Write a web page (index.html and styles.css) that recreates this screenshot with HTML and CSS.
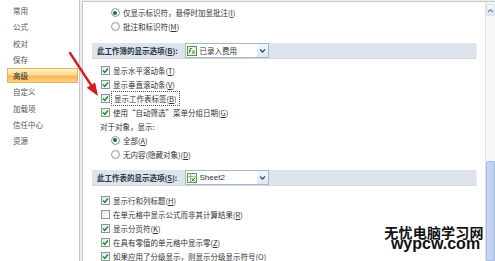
FILE: index.html
```html
<!DOCTYPE html>
<html lang="zh-CN">
<head>
<meta charset="utf-8">
<link rel="stylesheet" href="styles.css">
</head>
<body>
<div class="window">
  <nav class="sidebar">
    <div class="nav-item">常用</div>
    <div class="nav-item">公式</div>
    <div class="nav-item">校对</div>
    <div class="nav-item">保存</div>
    <div class="nav-item active">高级</div>
    <div class="nav-item">自定义</div>
    <div class="nav-item">加载项</div>
    <div class="nav-item">信任中心</div>
    <div class="nav-item">资源</div>
  </nav>
  <main class="panel">
    <div class="content">
      <div class="row radio-row first"><span class="radio checked"></span><span class="label">仅显示标识符，悬停时加显批注(<u>I</u>)</span></div>
      <div class="row radio-row"><span class="radio"></span><span class="label">批注和标识符(<u>M</u>)</span></div>

      <div class="band band-1">
        <span class="band-label">此工作簿的显示选项(<u>B</u>):</span>
        <div class="select">
          <svg class="sel-icon" width="10" height="10" viewBox="0 0 10 10"><rect x="0.5" y="0.5" width="9" height="9" fill="#eef6e8" stroke="#4c9a3a"/><path d="M2 7.5 L3.2 2.5 L5 2.5 M2.2 5 L4 5 M5.2 4.5 L7.8 7.8 M7.8 4.5 L5.2 7.8" stroke="#2f7a23" stroke-width="0.9" fill="none"/></svg>
          <span class="sel-text">已录入费用</span>
          <span class="sel-btn"><svg width="7" height="6" viewBox="0 0 7 6"><path d="M1 1.5 L3.5 4 L6 1.5" stroke="#2d4f86" stroke-width="1.3" fill="none"/></svg></span>
        </div>
      </div>

      <div class="row check-row after-band"><span class="check on"></span><span class="label">显示水平滚动条(<u>T</u>)</span></div>
      <div class="row check-row"><span class="check on"></span><span class="label">显示垂直滚动条(<u>V</u>)</span></div>
      <div class="row check-row"><span class="check on"></span><span class="label focus">显示工作表标签(<u>B</u>)</span></div>
      <div class="row check-row"><span class="check on green"></span><span class="label">使用“自动筛选”菜单分组日期(<u>G</u>)</span></div>
      <div class="row plain-row"><span class="label">对于对象，显示:</span></div>
      <div class="row radio-row"><span class="radio checked"></span><span class="label">全部(<u>A</u>)</span></div>
      <div class="row radio-row"><span class="radio"></span><span class="label">无内容(隐藏对象)(<u>D</u>)</span></div>

      <div class="band band-2">
        <span class="band-label">此工作表的显示选项(<u>S</u>):</span>
        <div class="select">
          <svg class="sel-icon" width="10" height="10" viewBox="0 0 10 10"><rect x="0.5" y="0.5" width="9" height="9" fill="#f2f8ee" stroke="#5c9e4a"/><path d="M0.5 3.5 H9.5 M3.5 0.5 V9.5" stroke="#7fb36d" stroke-width="0.8"/><path d="M4.5 5 L8 8.5 M8 5 L4.5 8.5" stroke="#2f7a23" stroke-width="1"/></svg>
          <span class="sel-text latin">Sheet2</span>
          <span class="sel-btn"><svg width="7" height="6" viewBox="0 0 7 6"><path d="M1 1.5 L3.5 4 L6 1.5" stroke="#2d4f86" stroke-width="1.3" fill="none"/></svg></span>
        </div>
      </div>

      <div class="row check-row after-band-2"><span class="check on"></span><span class="label">显示行和列标题(<u>H</u>)</span></div>
      <div class="row check-row"><span class="check"></span><span class="label">在单元格中显示公式而非其计算结果(<u>R</u>)</span></div>
      <div class="row check-row"><span class="check on"></span><span class="label">显示分页符(<u>K</u>)</span></div>
      <div class="row check-row"><span class="check on"></span><span class="label">在具有零值的单元格中显示零(<u>Z</u>)</span></div>
      <div class="row check-row"><span class="check on"></span><span class="label">如果应用了分级显示，则显示分级显示符号(<u>O</u>)</span></div>
    </div>
    <div class="scrollbar">
      <span class="scroll-up"><svg width="7" height="5" viewBox="0 0 7 5"><path d="M1 4 L3.5 1.5 L6 4" stroke="#6f87b0" stroke-width="1.2" fill="none"/></svg></span>
      <span class="scroll-thumb"></span>
    </div>
  </main>

  <svg class="arrow" width="495" height="261" viewBox="0 0 495 261">
    <line x1="70" y1="53" x2="91" y2="85" stroke="#cf2020" stroke-width="2.4" stroke-linecap="round"/>
    <polygon points="98,96 86.7,87.8 95.1,82.4" fill="#cf2020"/>
  </svg>

  <div class="watermark">
    <div class="wm-cn">无忧电脑学习网</div>
    <div class="wm-en">wypcw.com</div>
  </div>
</div>
</body>
</html>
```

FILE: styles.css
```css
* { box-sizing: border-box; }

html, body {
  margin: 0;
  padding: 0;
}

body {
  width: 495px;
  height: 261px;
  overflow: hidden;
  background: #ffffff;
  font-family: "Noto Sans CJK SC", "Noto Sans", sans-serif;
  font-size: 7.5px;
  color: #333333;
}

u { text-decoration: underline; text-underline-offset: 1px; }

.window {
  position: relative;
  display: flex;
  width: 495px;
  height: 261px;
  background: #ececec;
}

/* ---------- sidebar ---------- */
.sidebar {
  width: 80px;
  flex: none;
  background: #ffffff;
  border-right: 1px solid #c8c8c8;
  padding-top: 2.35px;
  display: flex;
  flex-direction: column;
}

.nav-item {
  height: 15px;
  margin: 0.65px 0 0.65px 7px;
  width: 71px;
  padding-left: 6px;
  display: flex;
  align-items: center;
  color: #555555;
}

.nav-item.active {
  color: #2b2b2b;
  background: linear-gradient(#fff1cc 0%, #fcd894 45%, #f8b54f 55%, #fbd083 100%);
  border: 1px solid #e6b25c;
  padding-left: 5px;
}

/* ---------- main panel ---------- */
.panel {
  flex: 1;
  margin-left: 2px;
  margin-top: 1px;
  border-left: 1px solid #c8c8c8;
  border-top: 1px solid #c8c8c8;
  background: #ffffff;
  display: flex;
  min-width: 0;
}

.content {
  flex: 1;
  padding: 3.5px 8px 0 9px;
  display: flex;
  flex-direction: column;
  min-width: 0;
}

.row {
  height: 14px;
  display: flex;
  align-items: center;
  white-space: nowrap;
  flex: none;
}

.radio-row { padding-left: 18.5px; }
.radio-row .label { margin-left: 3.5px; }

.check-row { padding-left: 9px; }
.check-row .label { margin-left: 3px; }

.plain-row { padding-left: 8px; }

.radio {
  width: 9px;
  height: 9px;
  border-radius: 50%;
  border: 1px solid #8d99a6;
  background: radial-gradient(circle at 40% 35%, #ffffff 0%, #e9ecef 100%);
  display: inline-flex;
  align-items: center;
  justify-content: center;
  flex: none;
}

.radio.checked::after {
  content: "";
  width: 4px;
  height: 4px;
  border-radius: 50%;
  background: #2f6f2c;
}

.check {
  width: 9px;
  height: 9px;
  border: 1px solid #8c96a0;
  background: linear-gradient(135deg, #e4e7ea 0%, #ffffff 100%);
  flex: none;
  position: relative;
}

.check.on {
  background:
    url("data:image/svg+xml;utf8,<svg xmlns='http://www.w3.org/2000/svg' width='7' height='7' viewBox='0 0 7 7'><path d='M1 3.5 L2.8 5.3 L6 1.6' stroke='%23229022' stroke-width='1.5' fill='none'/></svg>") center / 7px 7px no-repeat,
    linear-gradient(135deg, #e2e6e9 0%, #ffffff 100%);
}

.check.on.green {
  background:
    url("data:image/svg+xml;utf8,<svg xmlns='http://www.w3.org/2000/svg' width='7' height='7' viewBox='0 0 7 7'><path d='M1 3.5 L2.8 5.3 L6 1.6' stroke='%23229022' stroke-width='1.5' fill='none'/></svg>") center / 7px 7px no-repeat,
    linear-gradient(135deg, #d9ead2 0%, #f4fbef 100%);
}

.label.focus {
  outline: 1px dotted #555555;
  outline-offset: 1px;
  padding: 0 1px;
}

/* ---------- band headers ---------- */
.band {
  height: 16px;
  flex: none;
  display: flex;
  align-items: center;
  background: #dde4ec;
  border-bottom: 1px solid #cdd6e1;
  border-right: 1px solid #eef2f6;
  white-space: nowrap;
}

.band-1 { margin-top: 9.5px; }
.band-2 { margin-top: 9px; }

.after-band { margin-top: 4px; }
.after-band-2 { margin-top: 7px; }

.band-label {
  width: 93px;
  padding-left: 5px;
  font-weight: bold;
  color: #2a3440;
  flex: none;
}

.select {
  width: 84px;
  height: 15px;
  border: 1px solid #a8b7cb;
  background: #ffffff;
  display: flex;
  align-items: center;
  flex: none;
}

.sel-icon {
  margin-left: 1px;
  flex: none;
}

.sel-text {
  margin-left: 2.5px;
  flex: 1;
  color: #333333;
}

.sel-text.latin {
  font-family: "Liberation Sans", "Noto Sans", sans-serif;
  font-size: 8px;
}

.sel-btn {
  width: 11px;
  height: 13px;
  background: linear-gradient(#f3f7fc, #dde7f4);
  display: flex;
  align-items: center;
  justify-content: center;
  flex: none;
}

/* ---------- scrollbar ---------- */
.scrollbar {
  width: 10px;
  flex: none;
  border-left: 1px solid #e2e2e2;
  background: #f7f7f7;
  display: flex;
  flex-direction: column;
  align-items: stretch;
}

.scroll-up {
  height: 12px;
  margin-top: 2px;
  display: flex;
  align-items: center;
  justify-content: center;
  background: linear-gradient(#f4f7fc, #e3eaf5);
  border: 1px solid #d7dfec;
  border-radius: 2px;
}

.scroll-thumb {
  margin-top: 145px;
  flex: 1;
  background: linear-gradient(90deg, #c9d7f4, #bccdf0);
  border: 1px solid #a7badf;
  border-radius: 2px 0 0 0;
}

/* ---------- overlays ---------- */
.arrow {
  position: absolute;
  left: 0;
  top: 0;
  pointer-events: none;
}

.watermark {
  position: absolute;
  left: 383px;
  top: 225px;
  width: 102px;
  text-align: center;
  color: #111111;
  font-weight: bold;
}

.wm-cn {
  font-family: "Noto Sans CJK SC", sans-serif;
  font-size: 14px;
  line-height: 15px;
  letter-spacing: 0.2px;
}

.wm-en {
  font-family: "Liberation Sans", Arial, sans-serif;
  font-size: 16px;
  line-height: 16px;
  margin-top: -4px;
  padding-left: 3px;
}
```
